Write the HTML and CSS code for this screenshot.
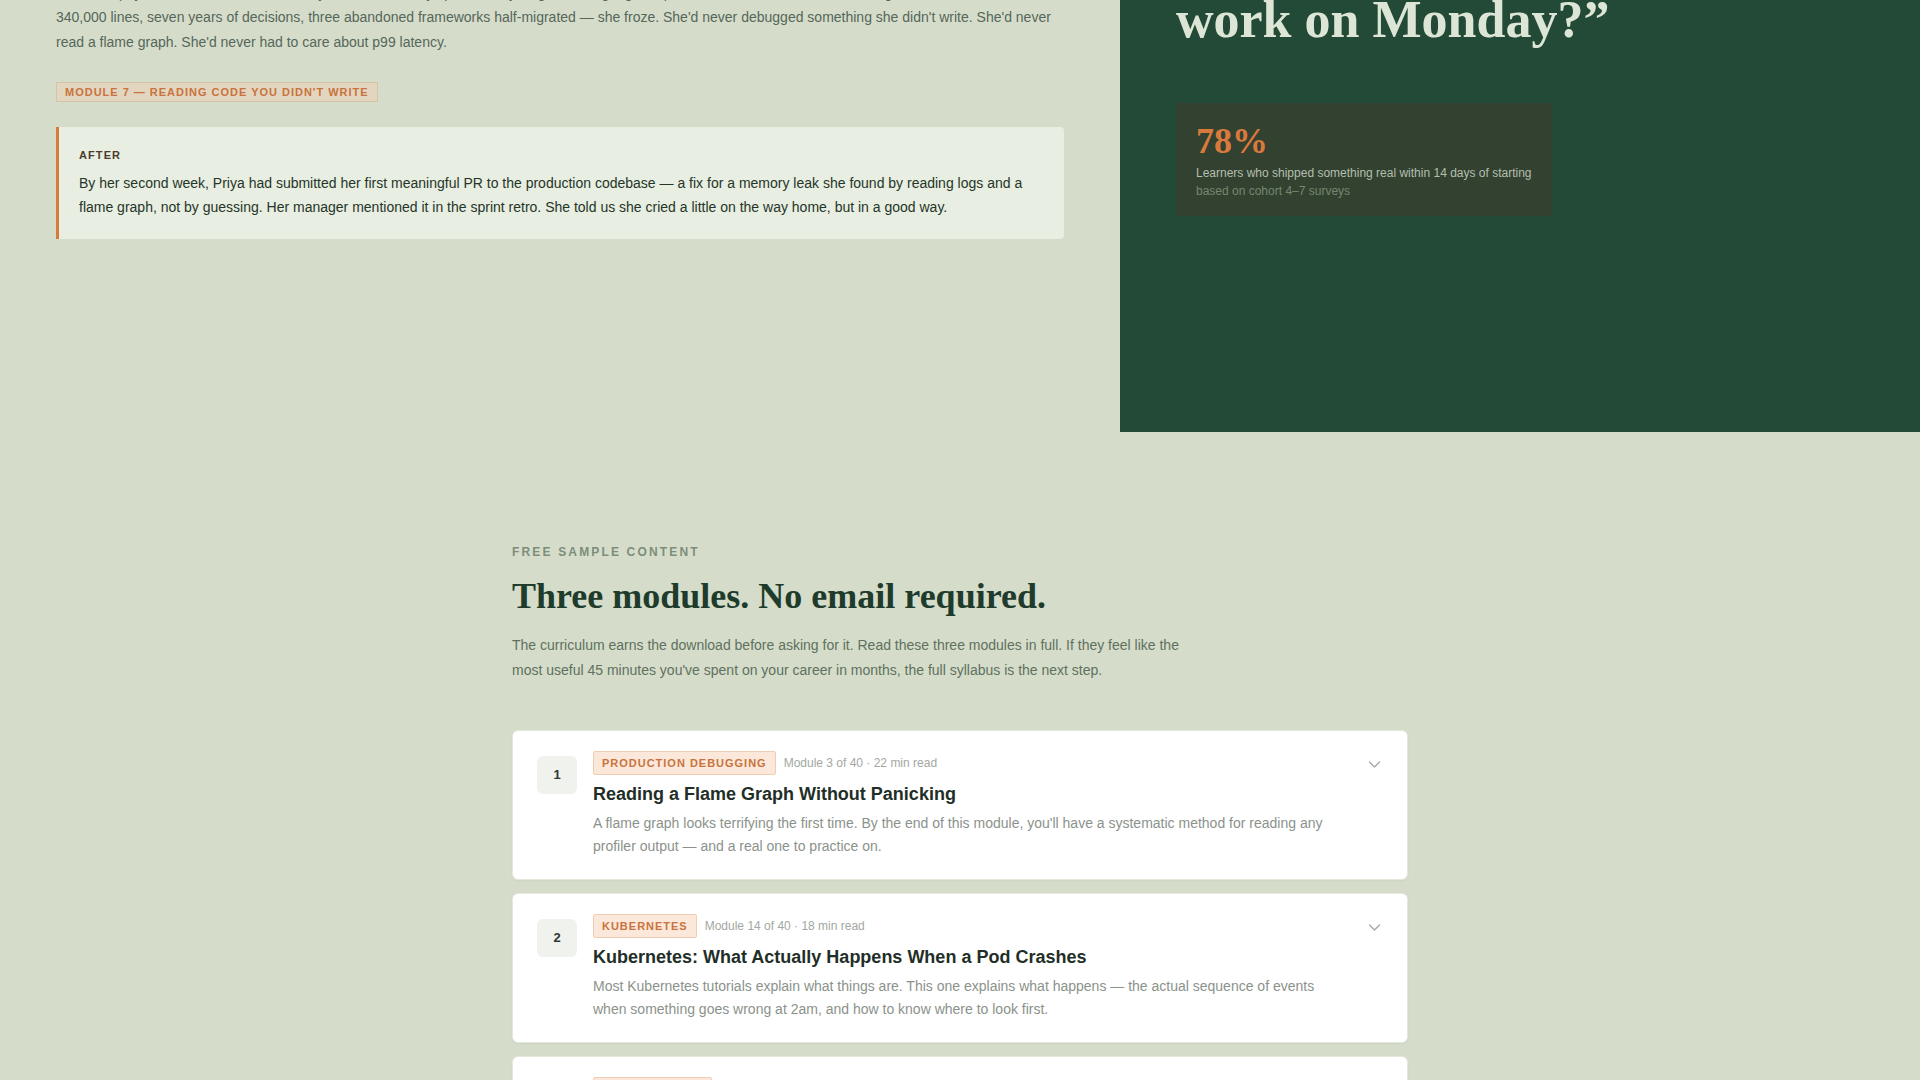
FILE: index.html
```html
<!DOCTYPE html>
<html lang="en">
<head>
<meta charset="utf-8">
<title>Production Engineering — Free sample modules</title>
<link rel="stylesheet" href="styles.css">
</head>
<body>
<section class="story">
  <div class="story-main">
    <p class="story-text">Priya joined a Series B fintech as a junior backend engineer after a twelve-week bootcamp and two side projects she was proud of. On day three her lead pointed her at the payments service and asked why checkout latency spiked every single evening, right at peak traffic. Faced with the real thing —<br>340,000 lines, seven years of decisions, three abandoned frameworks half-migrated — she froze. She'd never debugged something she didn't write. She'd never read a flame graph. She'd never had to care about p99 latency.</p>
    <span class="module-tag">Module 7 — Reading code you didn't write</span>
    <div class="after">
      <div class="after-label">After</div>
      <p>By her second week, Priya had submitted her first meaningful PR to the production codebase — a fix for a memory leak she found by reading logs and a flame graph, not by guessing. Her manager mentioned it in the sprint retro. She told us she cried a little on the way home, but in a good way.</p>
    </div>
  </div>
  <aside class="story-quote">
    <h2 class="quote">“What do I actually do at<br>work on Monday?”</h2>
    <div class="stat">
      <div class="stat-value">78%</div>
      <div class="stat-label">Learners who shipped something real within 14 days of starting</div>
      <div class="stat-note">based on cohort 4–7 surveys</div>
    </div>
  </aside>
</section>

<section class="samples">
  <div class="samples-inner">
    <div class="eyebrow">Free sample content</div>
    <h2 class="samples-title">Three modules. No email required.</h2>
    <p class="samples-intro">The curriculum earns the download before asking for it. Read these three modules in full. If they feel like the most useful 45 minutes you've spent on your career in months, the full syllabus is the next step.</p>

    <div class="module-list">
      <article class="module">
        <div class="module-num">1</div>
        <div class="module-body">
          <div class="module-meta">
            <span class="tag">Production Debugging</span>
            <span class="meta">Module 3 of 40 · 22 min read</span>
          </div>
          <h3>Reading a Flame Graph Without Panicking</h3>
          <p>A flame graph looks terrifying the first time. By the end of this module, you'll have a systematic method for reading any profiler output — and a real one to practice on.</p>
        </div>
        <svg class="chev" viewBox="0 0 16 16" aria-hidden="true"><path d="M2.5 6l5 5 5-5" fill="none" stroke="currentColor" stroke-width="1.4" stroke-linecap="round" stroke-linejoin="round"/></svg>
      </article>

      <article class="module">
        <div class="module-num">2</div>
        <div class="module-body">
          <div class="module-meta">
            <span class="tag">Kubernetes</span>
            <span class="meta">Module 14 of 40 · 18 min read</span>
          </div>
          <h3>Kubernetes: What Actually Happens When a Pod Crashes</h3>
          <p>Most Kubernetes tutorials explain what things are. This one explains what happens — the actual sequence of events when something goes wrong at 2am, and how to know where to look first.</p>
        </div>
        <svg class="chev" viewBox="0 0 16 16" aria-hidden="true"><path d="M2.5 6l5 5 5-5" fill="none" stroke="currentColor" stroke-width="1.4" stroke-linecap="round" stroke-linejoin="round"/></svg>
      </article>

      <article class="module">
        <div class="module-num">3</div>
        <div class="module-body">
          <div class="module-meta">
            <span class="tag">Observability</span>
            <span class="meta">Module 22 of 40 · 25 min read</span>
          </div>
          <h3>Logs, Metrics and Traces That Actually Help at 2am</h3>
          <p>Most dashboards are built to look busy. This module shows you which three signals matter when a service degrades, and how to get from an alert to a root cause in minutes.</p>
        </div>
        <svg class="chev" viewBox="0 0 16 16" aria-hidden="true"><path d="M2.5 6l5 5 5-5" fill="none" stroke="currentColor" stroke-width="1.4" stroke-linecap="round" stroke-linejoin="round"/></svg>
      </article>
    </div>
  </div>
</section>
</body>
</html>
```

FILE: styles.css
```css
* {
  box-sizing: border-box;
}

body {
  margin: 0;
  background: #d5ddca;
  font-family: "Liberation Sans", Arial, sans-serif;
  color: #2b3a30;
}

/* ---------- Story ---------- */
.story {
  display: grid;
  grid-template-columns: 1.4fr 1fr;
  margin-top: -100px;
  min-height: 532px;
}

.story-main {
  padding: 56px;
}

.story-text {
  margin: 0 0 28px;
  font-size: 14px;
  line-height: 24.5px;
  color: #55665a;
}

.module-tag {
  display: block;
  width: fit-content;
  margin-bottom: 25px;
  padding: 2px 8px;
  font-size: 11px;
  line-height: 14px;
  font-weight: 700;
  letter-spacing: 0.09em;
  text-transform: uppercase;
  color: #c8733d;
  background: #e3d6c0;
  border: 1px solid #d7c3a5;
}

.after {
  background: #e8eee1;
  border-left: 3px solid #d9793a;
  border-radius: 0 4px 4px 0;
  padding: 20px;
}

.after-label {
  font-size: 11px;
  line-height: 16px;
  font-weight: 700;
  letter-spacing: 0.1em;
  text-transform: uppercase;
  color: #4b3b2c;
  margin-bottom: 8px;
}

.after p {
  margin: 0;
  font-size: 14px;
  line-height: 24px;
  color: #253529;
}

.story-quote {
  background: #224a36;
  padding: 34px 56px 56px;
  display: flex;
  flex-direction: column;
  align-items: flex-start;
}

.quote {
  margin: 0;
  font-family: "Liberation Serif", "Times New Roman", serif;
  font-size: 52px;
  line-height: 1.1;
  font-weight: 700;
  color: #dde6d6;
}

.stat {
  margin-top: 55px;
  background: #334131;
  padding: 20px 20px 17px;
}

.stat-value {
  font-family: "Liberation Serif", "Times New Roman", serif;
  font-size: 36px;
  line-height: 1;
  font-weight: 700;
  color: #d97a3c;
  margin-bottom: 6px;
}

.stat-label {
  font-size: 12px;
  line-height: 16px;
  color: #b3bfad;
}

.stat-note {
  margin-top: 2px;
  font-size: 12px;
  line-height: 16px;
  color: #76866f;
}

/* ---------- Samples ---------- */
.samples {
  padding: 112px 0 80px;
}

.samples-inner {
  max-width: 896px;
  margin: 0 auto;
}

.eyebrow {
  margin: 0 0 15px;
  font-size: 12px;
  line-height: 16px;
  font-weight: 700;
  letter-spacing: 0.18em;
  text-transform: uppercase;
  color: #7d8d7a;
}

.samples-title {
  margin: 0 0 15px;
  font-family: "Liberation Serif", "Times New Roman", serif;
  font-size: 36px;
  line-height: 1.2;
  font-weight: 700;
  color: #1e3b2c;
}

.samples-intro {
  margin: 0;
  max-width: 680px;
  font-size: 14px;
  line-height: 25.2px;
  color: #607060;
}

.module-list {
  margin-top: 46px;
  display: flex;
  flex-direction: column;
  gap: 13px;
}

.module {
  display: flex;
  align-items: flex-start;
  gap: 16px;
  background: #ffffff;
  border: 1px solid #e4e9de;
  border-radius: 6px;
  padding: 20px 24px 21px;
  box-shadow: 0 1px 2px rgba(40, 60, 40, 0.05);
}

.module-num {
  flex: none;
  width: 40px;
  height: 38px;
  margin-top: 5px;
  display: flex;
  align-items: center;
  justify-content: center;
  background: #f0f2ee;
  border-radius: 6px;
  font-size: 13px;
  font-weight: 700;
  color: #2b3830;
}

.module-body {
  flex: 1;
  min-width: 0;
}

.module-meta {
  display: flex;
  align-items: center;
  gap: 8px;
}

.tag {
  padding: 4px 8px;
  font-size: 11px;
  line-height: 14px;
  font-weight: 700;
  letter-spacing: 0.09em;
  text-transform: uppercase;
  color: #c8733d;
  background: #fce8db;
  border: 1px solid #f1cbb2;
  border-radius: 2px;
}

.meta {
  font-size: 12px;
  color: #a2a8a1;
}

.module h3 {
  margin: 8px 0 6px;
  font-size: 18px;
  line-height: 1.3;
  font-weight: 700;
  color: #1f2f27;
}

.module p {
  margin: 0;
  font-size: 14px;
  line-height: 23px;
  color: #8b928b;
}

.chev {
  flex: none;
  width: 16px;
  height: 16px;
  margin-top: 5px;
  margin-left: 8px;
  color: #a5aaa4;
}
```
